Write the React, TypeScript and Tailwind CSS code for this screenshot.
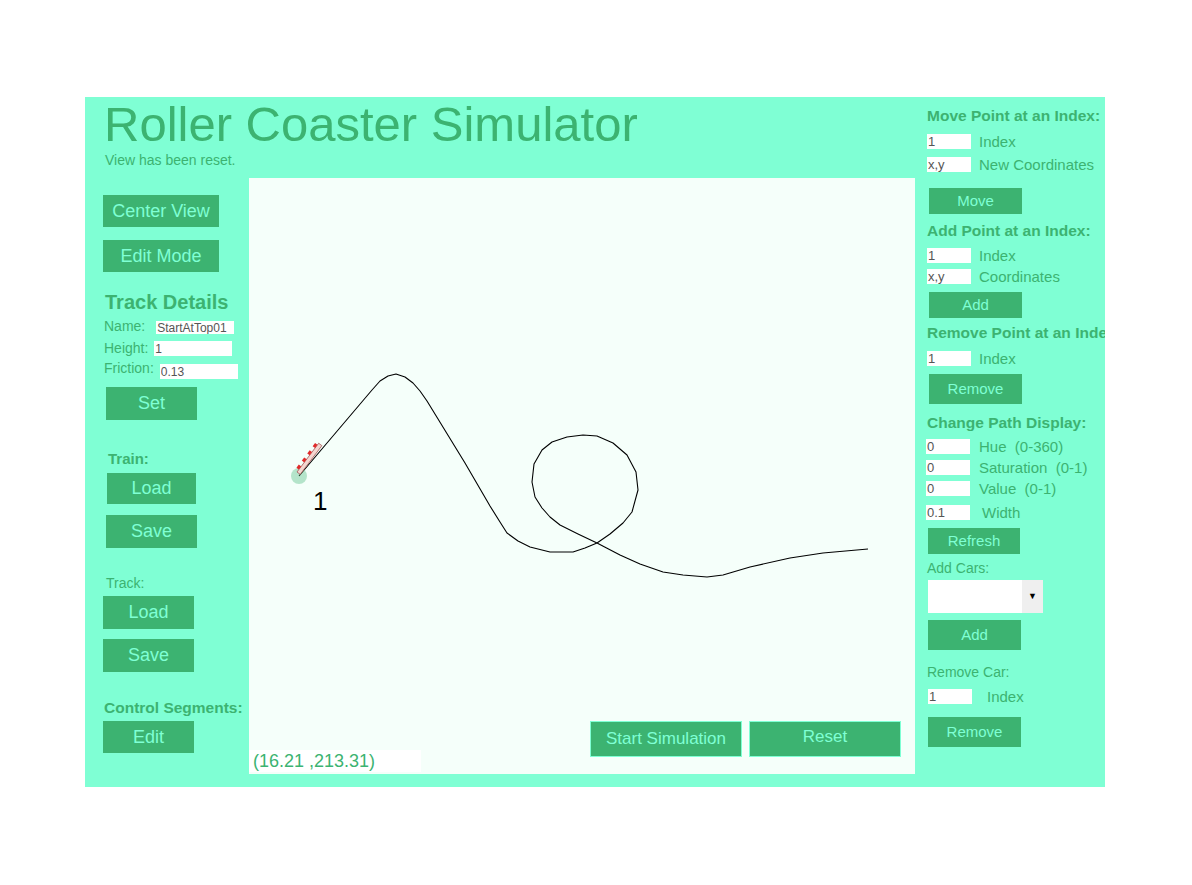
import React from "react"

const trackPoints =
  "299,476 372,390 380,381 388,376 396,374 405,377 413,383 420,391 427,401 465,463 490,506 500,522 507,533 518,541 530,547 550,552 573,552 585,548 597,543 610,534 623,523 632,512 638,490 636,472 627,455 613,443 597,436 583,435 567,437 552,442 542,450 534,464 532,482 535,497 542,508 550,517 560,525 578,534 597,543 620,555 640,564 663,572 683,575 707,577 723,575 750,567 790,558 823,553 868,549"

function Btn({ label, className }: { label: string; className: string }) {
  return (
    <button className={`flex items-center justify-center bg-[#3cb371] text-[#7fffd4] border border-[#7fffd4] ${className}`}>
      {label}
    </button>
  )
}

function Field({ value, className }: { value: string; className: string }) {
  return (
    <input
      readOnly
      value={value}
      className={`bg-white text-[#555] px-[1px] outline-none ${className}`}
    />
  )
}

function Row({ value, label, className, gap }: { value: string; label: string; className: string; gap: string }) {
  return (
    <div className={`flex items-center h-[15px] ${className}`}>
      <Field value={value} className="w-[44px] h-[15px] text-[13px]" />
      <span className={`text-[15px] leading-[15px] ${gap}`}>{label}</span>
    </div>
  )
}

function TrackCanvas() {
  return (
    <div className="relative w-[666px] h-[596px] bg-[#f5fffa] flex flex-col justify-end">
      <svg className="absolute inset-0" width="666" height="596" viewBox="249 178 666 596">
        <polyline points={trackPoints} fill="none" stroke="#000" strokeWidth="1.1" strokeLinejoin="round" />
        <circle cx="299" cy="476" r="8" fill="#3cb371" opacity="0.35" />
        <g transform="translate(299 476) rotate(-53)">
          <rect x="2" y="-4" width="36" height="4" fill="#f3d6d0" stroke="#a05050" strokeWidth="0.7" />
          <rect x="5" y="-7" width="4" height="3" fill="#e02a2a" />
          <rect x="14" y="-7" width="4" height="3" fill="#e02a2a" />
          <rect x="23" y="-7" width="4" height="3" fill="#e02a2a" />
          <rect x="32" y="-7" width="4" height="3" fill="#e02a2a" />
        </g>
        <text x="313" y="510" fontSize="26" fill="#000" fontFamily="Liberation Sans, Arial, sans-serif">1</text>
      </svg>
      <div className="relative flex items-end">
        <div className="w-[172px] h-[22px] bg-white mb-[2px] pl-[4px] text-[18px] leading-[22px] text-[#3cb371]">
          (16.21 ,213.31)
        </div>
        <div className="ml-auto flex gap-[7px] mr-[14px] mb-[17px]">
          <Btn label="Start Simulation" className="w-[152px] h-[36px] text-[17px]" />
          <Btn label="Reset" className="w-[152px] h-[36px] text-[17px] pb-[5px]" />
        </div>
      </div>
    </div>
  )
}

export default function App() {
  return (
    <div className="min-h-[885px] bg-white pt-[97px] pl-[85px]">
      <div className="w-[1020px] h-[690px] bg-[#7fffd4] flex overflow-hidden text-[#3cb371] font-['Liberation_Sans',Arial,sans-serif]">
        <div className="w-[830px] shrink-0 flex flex-col">
          <div className="h-[81px] flex flex-col">
            <h1 className="mt-[3px] ml-[19px] text-[49px] leading-[48px] whitespace-nowrap">Roller Coaster Simulator</h1>
            <p className="mt-[4px] ml-[20px] text-[14px] leading-[16px]">View has been reset.</p>
          </div>
          <div className="flex">
            <div className="w-[164px] shrink-0 flex flex-col items-start">
              <Btn label="Center View" className="mt-[16px] ml-[17px] w-[118px] h-[34px] text-[18px]" />
              <Btn label="Edit Mode" className="mt-[11px] ml-[17px] w-[118px] h-[34px] text-[18px]" />
              <h2 className="mt-[17px] ml-[20px] text-[20px] leading-[24px] font-bold">Track Details</h2>
              <div className="mt-[4px] ml-[19px] flex items-start">
                <span className="text-[14px] leading-[16px]">Name:</span>
                <Field value="StartAtTop01" className="ml-[11px] mt-[3px] w-[78px] h-[13px] text-[12px]" />
              </div>
              <div className="mt-[6px] ml-[19px] flex items-start">
                <span className="text-[14px] leading-[16px]">Height:</span>
                <Field value="1" className="ml-[6px] mt-[1px] w-[78px] h-[15px] text-[12px]" />
              </div>
              <div className="mt-[4px] ml-[19px] flex items-start">
                <span className="text-[14px] leading-[16px]">Friction:</span>
                <Field value="0.13" className="ml-[6px] mt-[4px] w-[78px] h-[15px] text-[12px]" />
              </div>
              <Btn label="Set" className="mt-[7px] ml-[20px] w-[93px] h-[35px] text-[18px]" />
              <span className="mt-[30px] ml-[23px] text-[15px] leading-[16px] font-bold">Train:</span>
              <Btn label="Load" className="mt-[5px] ml-[21px] w-[91px] h-[33px] text-[18px]" />
              <Btn label="Save" className="mt-[9px] ml-[20px] w-[93px] h-[35px] text-[18px]" />
              <span className="mt-[26px] ml-[21px] text-[14px] leading-[16px]">Track:</span>
              <Btn label="Load" className="mt-[4px] ml-[17px] w-[93px] h-[35px] text-[18px]" />
              <Btn label="Save" className="mt-[8px] ml-[17px] w-[93px] h-[35px] text-[18px]" />
              <span className="mt-[27px] ml-[19px] text-[15.5px] leading-[16px] font-bold whitespace-nowrap">Control Segments:</span>
              <Btn label="Edit" className="mt-[4px] ml-[17px] w-[93px] h-[34px] text-[18px]" />
            </div>
            <TrackCanvas />
          </div>
        </div>

        <div className="w-[190px] shrink-0 pl-[12px] flex flex-col items-start whitespace-nowrap">
          <h3 className="mt-[10px] text-[15.5px] leading-[17px] font-bold">Move Point at an Index:</h3>
          <Row value="1" label="Index" className="mt-[10px]" gap="ml-[8px]" />
          <Row value="x,y" label="New Coordinates" className="mt-[8px]" gap="ml-[8px]" />
          <Btn label="Move" className="mt-[15px] ml-[1px] w-[95px] h-[28px] text-[15px]" />
          <h3 className="mt-[7px] text-[15.5px] leading-[17px] font-bold">Add Point at an Index:</h3>
          <Row value="1" label="Index" className="mt-[9px]" gap="ml-[8px]" />
          <Row value="x,y" label="Coordinates" className="mt-[6px]" gap="ml-[8px]" />
          <Btn label="Add" className="mt-[7px] ml-[1px] w-[95px] h-[28px] text-[15px]" />
          <h3 className="mt-[5px] text-[15.5px] leading-[17px] font-bold">Remove Point at an Index:</h3>
          <Row value="1" label="Index" className="mt-[10px]" gap="ml-[8px]" />
          <Btn label="Remove" className="mt-[7px] ml-[1px] w-[95px] h-[32px] text-[15px]" />
          <h3 className="mt-[9px] text-[15.5px] leading-[17px] font-bold">Change Path Display:</h3>
          <Row value="0" label="Hue  (0-360)" className="mt-[8px] -ml-[1px] whitespace-pre" gap="ml-[9px]" />
          <Row value="0" label="Saturation  (0-1)" className="mt-[6px] -ml-[1px] whitespace-pre" gap="ml-[9px]" />
          <Row value="0" label="Value  (0-1)" className="mt-[6px] -ml-[1px] whitespace-pre" gap="ml-[9px]" />
          <Row value="0.1" label="Width" className="mt-[9px] -ml-[1px]" gap="ml-[12px]" />
          <Btn label="Refresh" className="mt-[7px] w-[94px] h-[28px] text-[15px]" />
          <span className="mt-[5px] text-[14px] leading-[16px]">Add Cars:</span>
          <div className="mt-[4px] ml-[1px] w-[115px] h-[33px] flex bg-white">
            <div className="flex-1" />
            <div className="w-[21px] bg-[#efefef] flex items-center justify-center text-[9px] text-black">▼</div>
          </div>
          <Btn label="Add" className="mt-[6px] w-[95px] h-[32px] text-[15px]" />
          <span className="mt-[13px] text-[14px] leading-[16px]">Remove Car:</span>
          <Row value="1" label="Index" className="mt-[9px] ml-[1px]" gap="ml-[15px]" />
          <Btn label="Remove" className="mt-[12px] w-[95px] h-[32px] text-[15px]" />
        </div>
      </div>
    </div>
  )
}
